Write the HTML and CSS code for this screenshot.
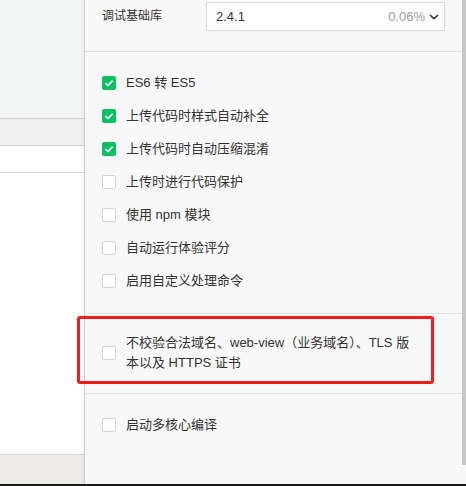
FILE: index.html
```html
<!DOCTYPE html>
<html lang="zh">
<head>
<meta charset="utf-8">
<link rel="stylesheet" href="styles.css">
</head>
<body>
<div class="page">
  <div class="main">
    <aside class="side">
      <div class="side-top"></div>
      <div class="side-band"></div>
      <div class="side-row"></div>
      <div class="side-body"></div>
      <div class="side-foot"></div>
    </aside>
    <section class="panel">
      <div class="head">
        <div class="head-label">调试基础库</div>
        <div class="select">
          <span class="select-value">2.4.1</span>
          <span class="select-pct">0.06%</span>
          <svg class="chev" width="10" height="6" viewBox="0 0 10 6"><path d="M1 1 L5 4.6 L9 1" fill="none" stroke="#333" stroke-width="1.6"/></svg>
        </div>
      </div>
      <div class="group g1">
        <label class="row"><span class="cb on"><svg width="14" height="14" viewBox="0 0 14 14"><path d="M3.4 7.2 L6 9.6 L10.6 4.6" fill="none" stroke="#fff" stroke-width="1.6"/></svg></span><span class="txt">ES6 转 ES5</span></label>
        <label class="row"><span class="cb on"><svg width="14" height="14" viewBox="0 0 14 14"><path d="M3.4 7.2 L6 9.6 L10.6 4.6" fill="none" stroke="#fff" stroke-width="1.6"/></svg></span><span class="txt">上传代码时样式自动补全</span></label>
        <label class="row"><span class="cb on"><svg width="14" height="14" viewBox="0 0 14 14"><path d="M3.4 7.2 L6 9.6 L10.6 4.6" fill="none" stroke="#fff" stroke-width="1.6"/></svg></span><span class="txt">上传代码时自动压缩混淆</span></label>
        <label class="row"><span class="cb"></span><span class="txt">上传时进行代码保护</span></label>
        <label class="row"><span class="cb"></span><span class="txt">使用 npm 模块</span></label>
        <label class="row"><span class="cb"></span><span class="txt">自动运行体验评分</span></label>
        <label class="row"><span class="cb"></span><span class="txt">启用自定义处理命令</span></label>
      </div>
      <div class="group g2">
        <label class="row tall"><span class="cb"></span><span class="txt wrap">不校验合法域名、web-view（业务域名）、TLS 版本以及 HTTPS 证书</span></label>
      </div>
      <div class="group g3">
        <label class="row"><span class="cb"></span><span class="txt">启动多核心编译</span></label>
      </div>
    </section>
    <div class="scrollbar"></div>
  </div>
  <div class="bottom-line"></div>
  <div class="highlight"></div>
</div>
</body>
</html>
```
FILE: styles.css
```css
* { box-sizing: border-box; }
html, body { margin: 0; padding: 0; }
body {
  width: 466px;
  height: 486px;
  overflow: hidden;
  font-family: "Liberation Sans", "Noto Sans CJK SC", sans-serif;
  color: #333;
  background: #f8f8f8;
}
.page {
  position: relative;
  width: 466px;
  height: 486px;
  display: flex;
  flex-direction: column;
}
.main {
  display: flex;
  height: 484px;
}
.side {
  width: 84px;
  display: flex;
  flex-direction: column;
  background: #fff;
}
.side-top { height: 119px; background: #f3f4f4; border-bottom: 1px solid #d2d2d2; }
.side-band { height: 27px; background: #f0f0f0; border-bottom: 1px solid #d2d2d2; }
.side-row { height: 27px; background: #fff; border-bottom: 1px solid #d6d6d6; }
.side-body { flex: 1; background: #fff; border-bottom: 1px solid #d6d6d6; }
.side-foot { height: 29px; background: #ecebe8; }
.panel {
  flex: 1;
  background: #f8f8f8;
  border-left: 1px solid #cfcfcf;
  box-shadow: -2px 0 4px rgba(0,0,0,0.04);
  display: flex;
  flex-direction: column;
}
.scrollbar {
  width: 4px;
  height: 465px;
  background: #c6c6c6;
}
.bottom-line { height: 2px; background: #1a1a1a; }
.head {
  height: 52px;
  padding: 2px 17px 0 17px;
  display: flex;
  align-items: flex-start;
  border-bottom: 1px solid #e2e2e2;
}
.head-label {
  width: 104px;
  height: 28px;
  line-height: 28px;
  font-size: 12px;
  color: #333;
}
.select {
  flex: 1;
  height: 29px;
  background: #fff;
  border: 1px solid #dcdcdc;
  display: flex;
  align-items: center;
  padding: 0 5px 0 9px;
  font-size: 13px;
}
.select-value { flex: 1; color: #333; }
.select-pct { color: #9a9a9a; margin-right: 4px; }
.chev { display: block; }
.group {
  border-bottom: 1px solid #e2e2e2;
  padding: 0 17px;
}
.g1 { padding-top: 14px; padding-bottom: 16px; }
.g2 { padding-top: 19px; padding-bottom: 20px; }
.g3 { padding-top: 14px; border-bottom: none; }
.row {
  display: flex;
  align-items: center;
  height: 33px;
  font-size: 13px;
}
.row.tall { height: 40px; }
.cb {
  width: 14px;
  height: 14px;
  flex: none;
  border: 1px solid #d3d3d3;
  background: #fff;
  border-radius: 2px;
  margin-right: 10px;
  display: flex;
  align-items: center;
  justify-content: center;
}
.cb.on {
  background: #07c160;
  border-color: #07c160;
}
.cb svg { display: block; flex: none; }
.txt { line-height: 20px; color: #333; }
.txt.wrap { max-width: 290px; }
.highlight {
  position: absolute;
  left: 77px;
  top: 316px;
  width: 357px;
  height: 68px;
  border: 3px solid #f61b1b;
  border-radius: 3px;
}
```
